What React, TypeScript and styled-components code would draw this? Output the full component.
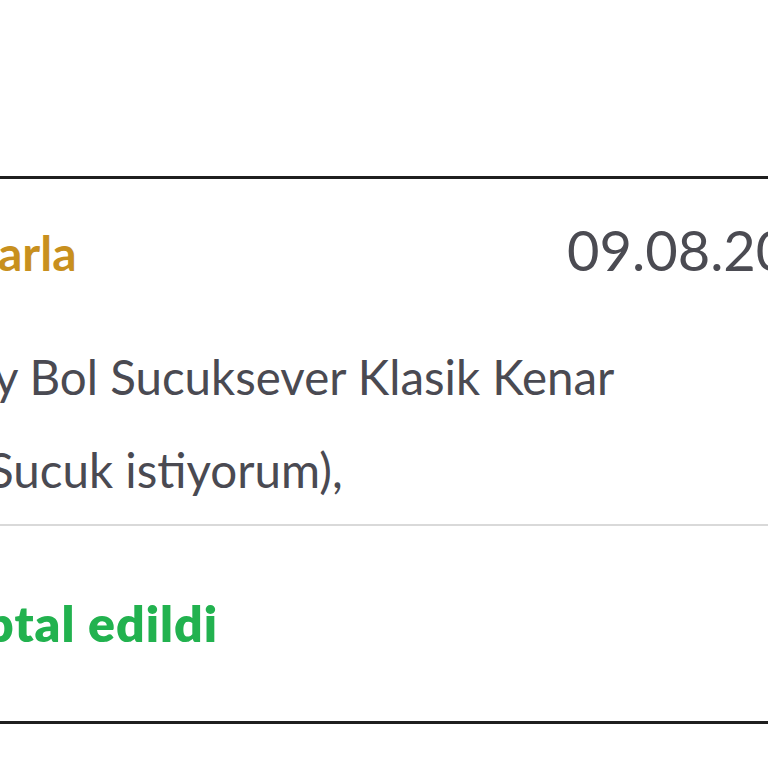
import { createGlobalStyle, styled } from 'styled-components'

const GlobalStyle = createGlobalStyle`
  html, body {
    margin: 0;
    padding: 0;
    background: #ffffff;
    overflow: hidden;
  }
  body {
    font-family: Lato, 'Liberation Sans', sans-serif;
  }
`

const App = () => {
  return (
    <>
      <GlobalStyle />
      <Page>
        <Card>
          <Header>
            <Customer $shift={2}>arla</Customer>
            <OrderDate>09.08.20</OrderDate>
          </Header>

          <Items>
            <ItemLine $shift={6}>y Bol Sucuksever Klasik Kenar</ItemLine>
            <ItemLine $shift={12}>Sucuk istiyorum),</ItemLine>
          </Items>

          <Footer>
            <Status $shift={15}>ptal edildi</Status>
          </Footer>
        </Card>
      </Page>
    </>
  )
}

export default App

const Page = styled.div`
  width: 768px;
  height: 768px;
  padding-top: 176px;
  box-sizing: border-box;
  overflow: hidden;
`

const Card = styled.section`
  border-top: 3px solid #1f1f1f;
  border-bottom: 3px solid #1f1f1f;
  background: #ffffff;
`

const Header = styled.div`
  display: flex;
  justify-content: space-between;
  align-items: baseline;
  padding-top: 43px;
  white-space: nowrap;
`

const Customer = styled.span<{ $shift: number }>`
  margin-left: ${(p) => -p.$shift}px;
  font-size: 48px;
  line-height: 1;
  font-weight: 700;
  color: #c8901e;
`

const OrderDate = styled.span`
  margin-left: auto;
  width: 201px;
  font-size: 56px;
  line-height: 1;
  font-weight: 400;
  color: #4b4b52;
  white-space: nowrap;
`

const Items = styled.div`
  margin-top: 52px;
  padding-bottom: 8px;
  border-bottom: 2px solid #d9d9d9;
`

const ItemLine = styled.p<{ $shift: number }>`
  margin: 0 0 0 ${(p) => -p.$shift}px;
  font-size: 47.5px;
  line-height: 93px;
  color: #4a4a52;
  white-space: nowrap;
`

const Footer = styled.div`
  padding: 72px 0 73px;
`

const Status = styled.p<{ $shift: number }>`
  margin: 0 0 0 ${(p) => -p.$shift}px;
  font-size: 50px;
  line-height: 1;
  font-weight: 800;
  letter-spacing: 1px;
  color: #22b24f;
  white-space: nowrap;
`
